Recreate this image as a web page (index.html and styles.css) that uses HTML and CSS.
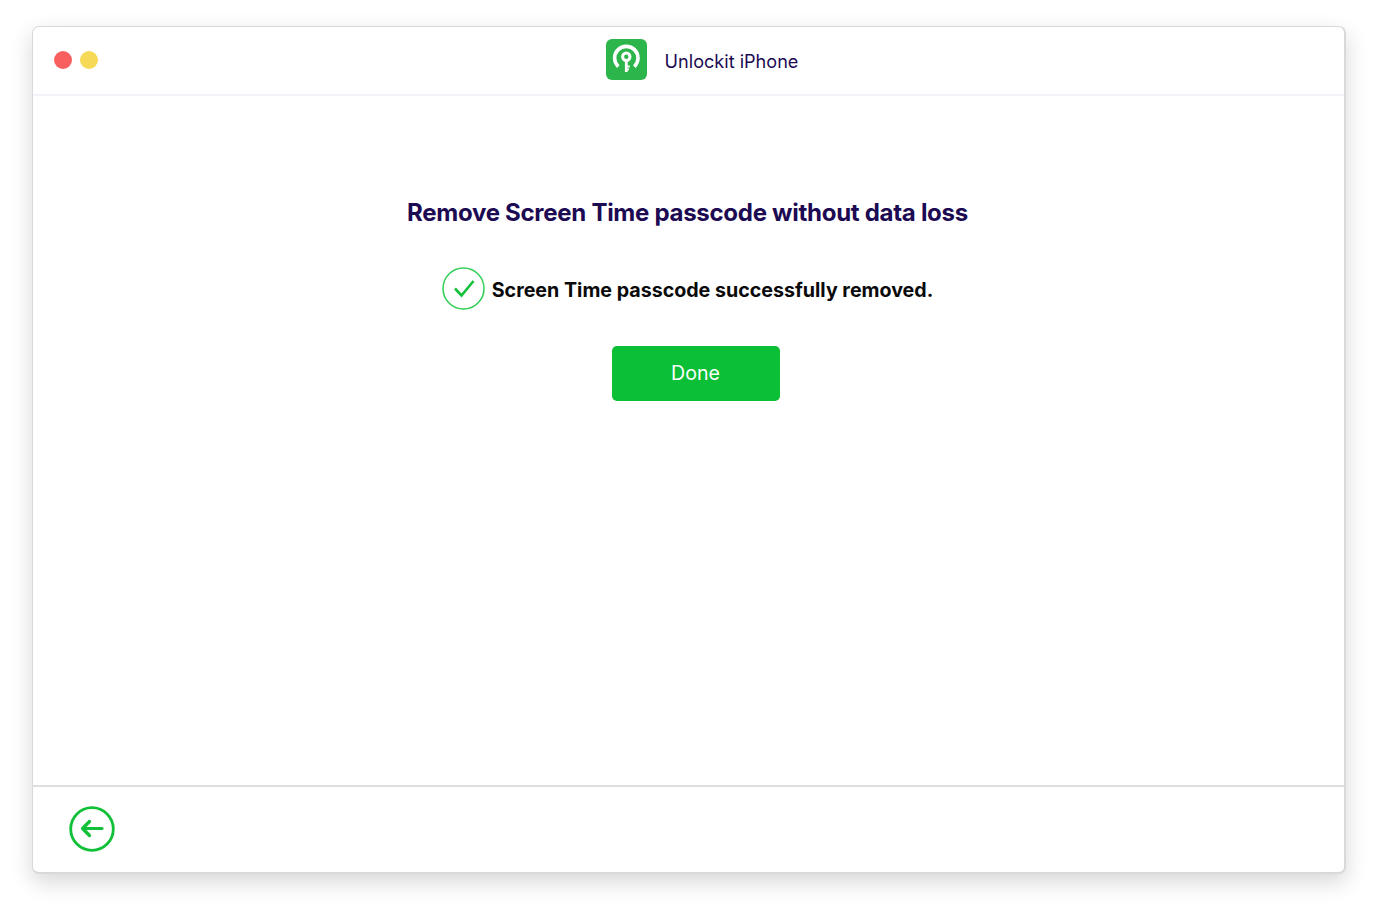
FILE: index.html
```html
<!DOCTYPE html>
<html lang="en">
<head>
<meta charset="utf-8">
<title>Unlockit iPhone</title>
<link rel="stylesheet" href="styles.css">
</head>
<body>
<div class="window">
  <header class="titlebar">
    <div class="lights">
      <span class="light red"></span>
      <span class="light yellow"></span>
    </div>
    <div class="brand">
      <svg class="logo" width="41" height="41" viewBox="0 0 41 41">
        <rect width="41" height="41" rx="6" fill="#2cb54a"/>
        <path d="M12.3 27.6A11.7 11.7 0 1 1 28.3 27.6" fill="none" stroke="#fff" stroke-width="3.6"/>
        <circle cx="20.3" cy="17.8" r="3.7" fill="none" stroke="#fff" stroke-width="3"/>
        <path d="M18.9 20h2.8v13h-2.8z" fill="#fff"/>
        <path d="M21 26.6h2.8v1.9H21zM21 29.6h2.1v1.7H21z" fill="#fff"/>
      </svg>
      <span class="app-name">Unlockit iPhone</span>
    </div>
  </header>
  <main class="content">
    <h1 class="heading">Remove Screen Time passcode without data loss</h1>
    <div class="status">
      <svg class="check" width="43" height="43" viewBox="0 0 43 43">
        <circle cx="21.5" cy="21.5" r="20.5" fill="none" stroke="#2fcf55" stroke-width="1.5"/>
        <path d="M13 21.5l6.5 7L31.5 14" fill="none" stroke="#13c03a" stroke-width="2.6"/>
      </svg>
      <span class="status-text">Screen Time passcode successfully removed.</span>
    </div>
    <button class="done" type="button">Done</button>
  </main>
  <footer class="footer">
    <svg class="back" width="46" height="46" viewBox="0 0 46 46">
      <circle cx="23" cy="23" r="21.3" fill="none" stroke="#10c038" stroke-width="2.8"/>
      <path d="M33 22.5H13.5M20.5 15.5l-7 7 7 7" fill="none" stroke="#10c038" stroke-width="3.2" stroke-linecap="round" stroke-linejoin="round"/>
    </svg>
  </footer>
</div>
</body>
</html>
```
FILE: styles.css
```css
* { box-sizing: border-box; }
html, body { height: 100%; }
body {
  margin: 0;
  background: #fff;
  padding: 26px 35px 40px 32px;
  font-family: Inter, "Liberation Sans", sans-serif;
  overflow: hidden;
}
.window {
  height: 848px;
  display: flex;
  flex-direction: column;
  background: #fff;
  border: 1px solid #d9d9d9;
  border-width: 1px 2px 2px 1px;
  border-radius: 7px;
  box-shadow: 0 8px 22px rgba(0, 0, 0, 0.16);
}
.titlebar {
  height: 69px;
  flex: none;
  display: grid;
  grid-template-columns: 1fr auto 1fr;
  align-items: center;
  border-bottom: 2px solid #f2f3f9;
  position: relative;
}
.lights {
  display: flex;
  gap: 9px;
  padding-left: 21px;
  position: absolute;
  top: 24px;
}
.light {
  width: 18px;
  height: 18px;
  border-radius: 50%;
}
.red { background: #f8605f; }
.yellow { background: #f6d957; transform: translateX(-1px); }
.brand {
  grid-column: 2;
  display: flex;
  align-items: center;
  gap: 18px;
  margin-left: 27px;
  padding-bottom: 2px;
}
.logo { display: block; }
.app-name {
  font-size: 18.1px;
  color: #1c0a52;
  padding-top: 2px;
}
.content {
  flex: 1;
  display: flex;
  flex-direction: column;
  align-items: center;
}
.heading {
  margin: 102px 0 0;
  font-size: 24.05px;
  line-height: 30px;
  font-weight: 700;
  letter-spacing: -0.3px;
  color: #1c0a52;
  transform: translateX(-1px);
}
.status {
  margin-top: 39px;
  display: flex;
  align-items: center;
  gap: 7px;
  margin-left: -2px;
}
.check { display: block; }
.status-text {
  font-size: 19.65px;
  font-weight: 700;
  color: #0a0a0a;
  padding-top: 2px;
}
.done {
  margin-top: 36px;
  margin-left: 14px;
  width: 168px;
  height: 55px;
  border: 0;
  border-radius: 5px;
  background: #0bbf36;
  color: #fff;
  font-family: inherit;
  font-size: 19.6px;
  font-weight: 400;
  padding-bottom: 3px;
}
.footer {
  height: 87px;
  flex: none;
  border-top: 2px solid #dedede;
  display: flex;
  align-items: center;
  padding-left: 35.5px;
  padding-bottom: 2px;
}
.back { display: block; }
```
